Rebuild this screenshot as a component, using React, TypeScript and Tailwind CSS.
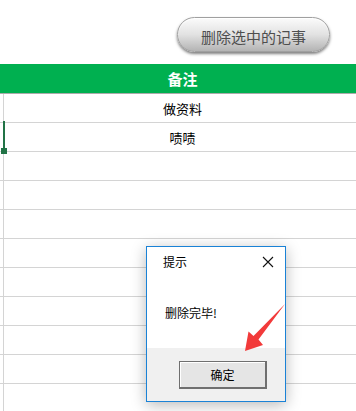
import React from "react";

const rows = ["做资料", "啧啧", "", "", "", "", "", "", "", "", ""];

export default function App() {
  return (
    <div
      className="relative w-[356px] h-[411px] overflow-hidden bg-white"
      style={{ fontFamily: '"Noto Sans CJK SC", "Microsoft YaHei", sans-serif' }}
    >
      {/* top bar */}
      <div className="h-[64px] pl-[177px] pt-[17px]">
        <button className="w-[153px] h-[35px] rounded-full border border-[#a0a0a0] bg-gradient-to-b from-[#fbfbfb] via-[#e2e2e2] to-[#b4b4b4] shadow-[0_2px_3px_rgba(0,0,0,0.5),inset_0_1px_1px_#ffffff] text-[15px] leading-none text-[#4e4e4e] flex items-center justify-center pt-[3px]">
          删除选中的记事
        </button>
      </div>

      {/* header */}
      <div className="h-[29px] bg-[#00b050] flex items-center justify-center pl-[9px] text-white font-bold text-[15px] leading-none">
        备注
      </div>

      {/* rows */}
      {rows.map((t, i) => (
        <div
          key={i}
          className={`flex h-[29px] border-t ${i === 0 ? "border-[#ababab]" : "border-[#d4d4d4]"}`}
        >
          <div className="w-[3px]" />
          <div className="flex-1 border-l border-[#d4d4d4] flex items-center justify-center pl-[5px] text-[13px] leading-none text-black">
            {t}
          </div>
        </div>
      ))}

      {/* selection */}
      <div className="absolute left-[3px] top-[121px] w-[2px] h-[28px] bg-[#217346]" />
      <div className="absolute left-[1px] top-[148px] w-[6px] h-[6px] bg-[#217346]" />

      {/* dialog */}
      <div className="absolute left-[146px] top-[246px] w-[140px] h-[156px] border border-[#1a82d6] bg-white shadow-[0_3px_14px_rgba(0,0,0,0.28)] flex flex-col">
        <div className="h-[30px] flex items-center justify-between pl-[16px] pr-[10px]">
          <span className="text-[12px] leading-none text-black">提示</span>
          <svg width="12" height="12" viewBox="0 0 12 12" className="mr-[1px]">
            <path d="M1 1 L11 11 M11 1 L1 11" stroke="#111" strokeWidth="1.1" fill="none" />
          </svg>
        </div>
        <div className="h-[71px] flex items-center pl-[18px] text-[12px] leading-none text-black">
          删除完毕!
        </div>
        <div className="flex-1 bg-[#f0f0f0] pl-[32px] pt-[13px]">
          <button className="w-[88px] h-[28px] border border-[#6f6f6f] border-r-2 border-b-2 bg-[#e5e5e5] shadow-[inset_1px_1px_0_#ffffff] flex items-center justify-center text-[12px] leading-none text-black">
            确定
          </button>
        </div>
      </div>

      {/* red arrow */}
      <svg className="absolute left-0 top-0 pointer-events-none" width="356" height="411" viewBox="0 0 356 411">
        <path d="M285 304 L258.5 339.5 L263 345 L245 351 L248.5 331.5 L253.5 336 Z" fill="#f23a3a" />
      </svg>
    </div>
  );
}
